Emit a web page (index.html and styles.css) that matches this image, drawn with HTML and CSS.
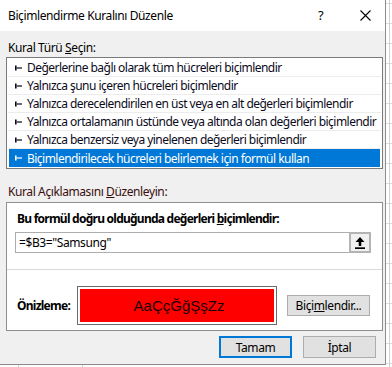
FILE: index.html
```html
<!DOCTYPE html>
<html lang="tr">
<head>
<meta charset="utf-8">
<title>Biçimlendirme Kuralını Düzenle</title>
<link rel="stylesheet" href="styles.css">
</head>
<body>
<div class="dialog">
  <div class="titlebar">
    <span class="title">Biçimlendirme Kuralını Düzenle</span>
    <span class="help">?</span>
    <span class="close"><svg width="11" height="11" viewBox="0 0 11 11"><path d="M0.5 0.5 L10.5 10.5 M10.5 0.5 L0.5 10.5" stroke="#000" stroke-width="1.1" fill="none"/></svg></span>
  </div>
  <div class="content">
    <div class="label">Kural Türü <u>S</u>eçin:</div>
    <ul class="listbox">
      <li class="item"><svg class="arrow" width="7" height="6" viewBox="0 0 7 6"><rect x="0" y="0.5" width="1.6" height="5" fill="currentColor"/><rect x="1.6" y="2.4" width="5.4" height="1.2" fill="currentColor"/></svg><span>Değerlerine bağlı olarak tüm hücreleri biçimlendir</span></li>
      <li class="item"><svg class="arrow" width="7" height="6" viewBox="0 0 7 6"><rect x="0" y="0.5" width="1.6" height="5" fill="currentColor"/><rect x="1.6" y="2.4" width="5.4" height="1.2" fill="currentColor"/></svg><span>Yalnızca şunu içeren hücreleri biçimlendir</span></li>
      <li class="item"><svg class="arrow" width="7" height="6" viewBox="0 0 7 6"><rect x="0" y="0.5" width="1.6" height="5" fill="currentColor"/><rect x="1.6" y="2.4" width="5.4" height="1.2" fill="currentColor"/></svg><span>Yalnızca derecelendirilen en üst veya en alt değerleri biçimlendir</span></li>
      <li class="item"><svg class="arrow" width="7" height="6" viewBox="0 0 7 6"><rect x="0" y="0.5" width="1.6" height="5" fill="currentColor"/><rect x="1.6" y="2.4" width="5.4" height="1.2" fill="currentColor"/></svg><span>Yalnızca ortalamanın üstünde veya altında olan değerleri biçimlendir</span></li>
      <li class="item"><svg class="arrow" width="7" height="6" viewBox="0 0 7 6"><rect x="0" y="0.5" width="1.6" height="5" fill="currentColor"/><rect x="1.6" y="2.4" width="5.4" height="1.2" fill="currentColor"/></svg><span>Yalnızca benzersiz veya yinelenen değerleri biçimlendir</span></li>
      <li class="item selected"><svg class="arrow" width="7" height="6" viewBox="0 0 7 6"><rect x="0" y="0.5" width="1.6" height="5" fill="currentColor"/><rect x="1.6" y="2.4" width="5.4" height="1.2" fill="currentColor"/></svg><span>Biçimlendirilecek hücreleri belirlemek için formül kullan</span></li>
    </ul>
    <div class="label label-desc">Kural Açıklamasını <u>D</u>üzenleyin:</div>
    <div class="panel">
      <div class="panel-title">Bu formül doğru olduğunda değerleri <u>b</u>içimlendir:</div>
      <div class="formula-row">
        <div class="formula-input">=$B3="Samsung"</div>
        <div class="collapse-btn"><svg width="10" height="12" viewBox="0 0 10 12"><polygon points="5,0 9.5,5 6.3,5 6.3,9 3.7,9 3.7,5 0.5,5" fill="#000"/><rect x="0" y="10.3" width="10" height="1.7" fill="#000"/></svg></div>
      </div>
      <div class="separator"></div>
      <div class="preview-row">
        <span class="preview-label">Önizleme:</span>
        <div class="preview-frame"><div class="preview-swatch">AaÇçĞğŞşZz</div></div>
        <div class="btn format-btn">Biçi<u>m</u>lendir...</div>
      </div>
    </div>
    <div class="actions">
      <div class="btn btn-default">Tamam</div>
      <div class="btn">İptal</div>
    </div>
  </div>
</div>
</body>
</html>
```

FILE: styles.css
```css
html, body {
  margin: 0;
  padding: 0;
}
body {
  width: 392px;
  height: 367px;
  overflow: hidden;
  font-family: "Noto Sans", "Open Sans", sans-serif;
  font-size: 12px;
  letter-spacing: -0.4px;
  color: #000;
  background-color: #ffffff;
  background-image:
    linear-gradient(#d0d0d0, #d0d0d0),
    linear-gradient(#d0d0d0, #d0d0d0),
    linear-gradient(#d0d0d0, #d0d0d0),
    repeating-linear-gradient(to bottom, #dcdcdc 0 1px, transparent 1px 20px);
  background-size: 1px 100%, 1px 100%, 1px 100%, 100% 100%;
  background-position: 389px 0, 18px 0, 82px 0, 0 3px;
  background-repeat: no-repeat, no-repeat, no-repeat, repeat;
}
.dialog {
  width: 385px;
  height: 364px;
  background: #f0f0f0;
  border-right: 1px solid #8c8c8c;
  border-bottom: 1px solid #8c8c8c;
}
.titlebar {
  height: 31px;
  background: #ffffff;
  display: flex;
  align-items: center;
  line-height: 31px;
}
.title {
  flex: 1;
  padding-left: 8px;
}
.help {
  width: 42px;
  font-size: 13px;
}
.close {
  width: 25px;
  display: flex;
  align-items: center;
}
.content {
  padding: 9px 0 0 6px;
}
.label {
  line-height: 16px;
  padding-left: 2px;
  margin-bottom: 1px;
}
.label-desc {
  margin-top: 15px;
  margin-bottom: 2px;
  color: #3a0e0e;
}
.listbox {
  list-style: none;
  margin: 0;
  width: 377px;
  box-sizing: border-box;
  border: 1px solid #7a7a7a;
  padding: 1px;
  background: #ffffff;
}
.item {
  height: 18px;
  box-sizing: border-box;
  border-bottom: 1px solid #ececec;
  display: flex;
  align-items: center;
  padding-left: 7px;
  color: #0a0a20;
  white-space: nowrap;
  letter-spacing: -0.53px;
  overflow: hidden;
}
.item .arrow {
  margin-right: 5px;
  flex: none;
}
.item.selected {
  background: #0078d7;
  color: #ffffff;
  border-bottom: none;
  margin: 0 1px;
  padding-left: 6px;
}
.panel {
  width: 377px;
  height: 129px;
  box-sizing: border-box;
  border: 1px solid #8f8f8f;
  background: #ffffff;
  padding-top: 8px;
}
.panel-title {
  font-weight: bold;
  letter-spacing: -0.75px;
  line-height: 16px;
  padding-left: 10px;
}
.formula-row {
  display: flex;
  margin: 5px 0 0 8px;
  width: 356px;
  height: 21px;
}
.formula-input {
  flex: 1;
  box-sizing: border-box;
  border: 1px solid #adadad;
  border-right: none;
  padding-left: 3px;
  line-height: 19px;
}
.collapse-btn {
  width: 22px;
  box-sizing: border-box;
  border: 2px solid #b4b4b4;
  background: #f0f0f0;
  display: flex;
  align-items: center;
  justify-content: center;
}
.separator {
  height: 1px;
  background: #dadada;
  margin-top: 16px;
}
.preview-row {
  display: flex;
  align-items: center;
  margin-top: 16px;
  padding-left: 10px;
}
.preview-label {
  font-weight: bold;
  letter-spacing: -0.75px;
  width: 60px;
}
.preview-frame {
  width: 200px;
  height: 39px;
  box-sizing: border-box;
  border: 1px solid #6a6a6a;
  padding: 2px;
  background: #ffffff;
}
.preview-swatch {
  height: 100%;
  background: #ff0000;
  display: flex;
  align-items: center;
  justify-content: center;
  font-family: "Liberation Sans", Arial, sans-serif;
  font-size: 15px;
  letter-spacing: 0;
  color: #1a0000;
  padding-left: 4px;
}
.btn {
  width: 73px;
  height: 22px;
  box-sizing: border-box;
  border: 1px solid #adadad;
  background: #e1e1e1;
  display: flex;
  align-items: center;
  justify-content: center;
}
.format-btn {
  width: 83px;
  height: 21px;
  margin-left: 10px;
}
.actions {
  display: flex;
  justify-content: flex-end;
  gap: 11px;
  margin-top: 5px;
  margin-right: 9px;
}
.btn-default {
  border: 2px solid #0078d7;
}
```
